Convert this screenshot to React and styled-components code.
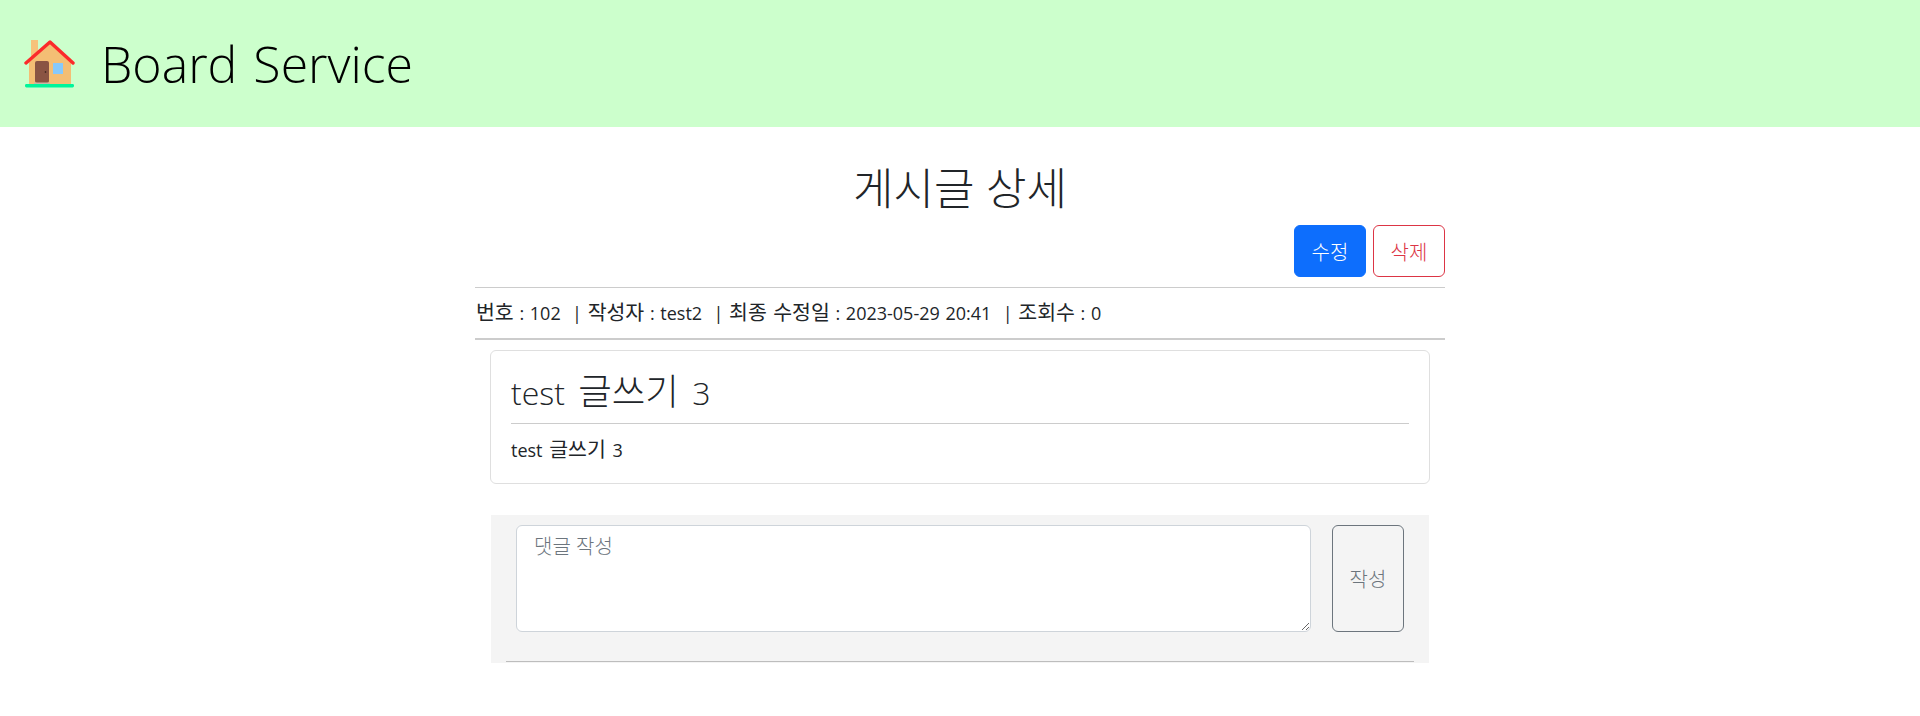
import * as React from 'react'
import styled, { createGlobalStyle } from 'styled-components'

const GlobalStyle = createGlobalStyle`
  body {
    margin: 0;
    background: #fff;
    color: #212529;
    font-family: "Open Sans", "Noto Sans CJK KR", sans-serif;
    font-size: 18px;
  }
`

const Header = styled.header`
  display: flex;
  align-items: center;
  height: 127px;
  padding-left: 24px;
  box-sizing: border-box;
  background: #ccffcc;
`

const HomeIcon = styled.svg`
  width: 52px;
  height: 50px;
  margin-right: 25px;
`

const Brand = styled.span`
  font-size: 50px;
  font-weight: 300;
  line-height: 1.2;
  word-spacing: 3px;
  color: #000;
`

const Ko = styled.span`
  font-size: 1.14em;
  line-height: 1;
`

const Container = styled.main`
  width: 970px;
  margin: 0 auto;
`

const Title = styled.h1`
  margin: 0;
  padding-top: 37px;
  height: 48px;
  font-size: 44px;
  font-weight: 300;
  line-height: 48px;
  text-align: center;
`

const ButtonRow = styled.div`
  display: flex;
  justify-content: flex-end;
  gap: 7px;
  margin-top: 13px;
`

const Button = styled.button`
  width: 72px;
  height: ${(p) => p.$height || '52px'};
  padding: 0;
  box-sizing: border-box;
  border: 1px solid ${(p) => p.$color};
  border-radius: 6px;
  background: ${(p) => (p.$solid ? p.$color : 'transparent')};
  color: ${(p) => (p.$solid ? '#fff' : p.$color)};
  font-family: inherit;
  font-size: 20px;
  font-weight: 300;
`

const Meta = styled.div`
  display: flex;
  align-items: center;
  height: 53px;
  margin-top: 10px;
  box-sizing: border-box;
  border-top: 1px solid #cccccc;
  border-bottom: 2px solid #cccccc;
  padding-left: 1px;
  white-space: pre-wrap;
  word-spacing: 1px;
`

const MetaLine = styled.span`
  display: block;
`

const Card = styled.section`
  margin: 10px 15px 0;
  height: 134px;
  box-sizing: border-box;
  padding: 0 20px;
  border: 1px solid #dfdfdf;
  border-radius: 6px;
`

const CardTitle = styled.h2`
  margin: 0;
  height: 72px;
  border-bottom: 1px solid #cccccc;
  font-size: 32px;
  font-weight: 300;
  line-height: 84px;
  word-spacing: 5px;
`

const CardBody = styled.p`
  margin: 0;
  font-size: 18px;
  line-height: 52px;
  word-spacing: 2px;
`

const CommentForm = styled.form`
  margin: 31px 16px 0;
  height: 148px;
  box-sizing: border-box;
  padding-top: 10px;
  background: #f4f4f4;
`

const CommentRow = styled.div`
  display: flex;
  gap: 21px;
  height: 107px;
  padding-left: 25px;
`

const CommentInput = styled.textarea`
  width: 795px;
  height: 107px;
  box-sizing: border-box;
  padding: 6px 17px;
  border: 1px solid #ced4da;
  border-radius: 6px;
  background: #fff;
  color: #212529;
  font-family: inherit;
  font-size: 20px;
  font-weight: 300;
  line-height: 30px;
  outline: none;

  &::placeholder {
    color: #6c757d;
    opacity: 1;
  }
`

const Divider = styled.hr`
  margin: 29px 15px 0;
  border: 0;
  border-top: 1px solid #bdbdbd;
`

function HouseIcon() {
  return (
    <HomeIcon viewBox="0 0 52 50" aria-hidden="true">
      <rect x="7" y="1" width="7" height="16" fill="#f6c27a" />
      <path d="M5 20 L26 2 L47 20 V45 H5 Z" fill="#f4be74" />
      <rect x="11" y="22" width="14" height="22" rx="2" fill="#8a5443" />
      <rect x="10" y="43.5" width="16" height="2" fill="#c9b7a5" />
      <circle cx="21.5" cy="33" r="0.8" fill="#2b1a14" />
      <rect x="29" y="24" width="10" height="11" fill="#87c9fb" />
      <path d="M2 24 L26 3 L49 24" fill="none" stroke="#fb2b2b" strokeWidth="3.4" strokeLinecap="round" strokeLinejoin="round" />
      <rect x="1" y="45" width="49" height="3.4" rx="1.4" fill="#00f59b" />
    </HomeIcon>
  )
}

export default function App() {
  return (
    <>
      <GlobalStyle />
      <Header>
        <HouseIcon />
        <Brand>Board Service</Brand>
      </Header>
      <Container>
        <Title>게시글 상세</Title>
        <ButtonRow>
          <Button type="button" $solid $color="#0d6efd">수정</Button>
          <Button type="button" $color="#dc3545">삭제</Button>
        </ButtonRow>
        <Meta>
          <MetaLine>
            <Ko>번호</Ko> : 102  | <Ko>작성자</Ko> : test2  | <Ko>최종 수정일</Ko> : 2023-05-29 20:41  | <Ko>조회수</Ko> : 0
          </MetaLine>
        </Meta>
        <Card>
          <CardTitle>test <Ko>글쓰기</Ko> 3</CardTitle>
          <CardBody>test <Ko>글쓰기</Ko> 3</CardBody>
        </Card>
        <CommentForm>
          <CommentRow>
            <CommentInput placeholder="댓글 작성" />
            <Button type="button" $color="#6c757d" $height="107px">작성</Button>
          </CommentRow>
          <Divider />
        </CommentForm>
      </Container>
    </>
  )
}
